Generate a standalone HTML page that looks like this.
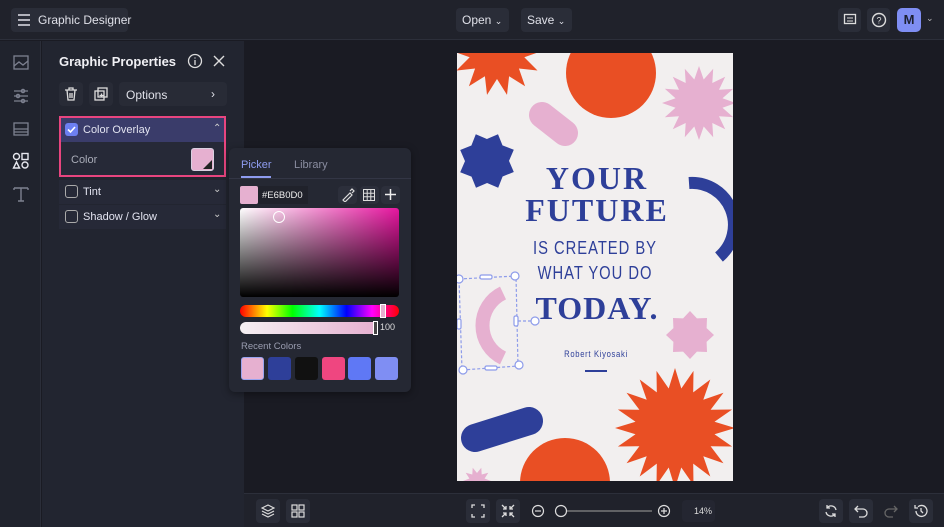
<!DOCTYPE html>
<html><head><meta charset="utf-8"><style>
*{box-sizing:border-box;margin:0;padding:0}
body{width:944px;height:527px;overflow:hidden;background:#1a1b23;font-family:"Liberation Sans",sans-serif;color:#e6e7ee;position:relative}
.abs{position:absolute}
.btn{position:absolute;background:#2a2d38;border-radius:4px}
.t{font-size:12px;color:#dfe0e8}
</style></head><body>
<!-- top bar -->
<div class="abs" style="left:0;top:0;width:944px;height:40px;background:#20222b;border-bottom:1px solid #2c2f3a"></div>
<div class="btn" style="left:11px;top:8px;width:117px;height:24px"></div>
<svg class="abs" style="left:17px;top:13px" width="14" height="14"><path d="M1 2h12M1 7h12M1 12h12" stroke="#e0e0e8" stroke-width="1.6"/></svg>
<div class="abs t" style="left:38px;top:13px">Graphic Designer</div>
<div class="btn" style="left:456px;top:8px;width:53px;height:24px"></div>
<div class="abs t" style="left:462px;top:13px">Open <span style="font-size:9px">⌄</span></div>
<div class="btn" style="left:521px;top:8px;width:51px;height:24px"></div>
<div class="abs t" style="left:527px;top:13px">Save <span style="font-size:9px">⌄</span></div>
<div class="btn" style="left:838px;top:8px;width:23px;height:24px"></div>
<svg class="abs" style="left:843px;top:13px" width="14" height="14"><rect x="1.5" y="1.5" width="11" height="9" fill="none" stroke="#ddd" stroke-width="1.3"/><path d="M4 5h6M4 8h6" stroke="#ddd"/></svg>
<div class="btn" style="left:867px;top:8px;width:23px;height:24px"></div>
<svg class="abs" style="left:871px;top:12px" width="16" height="16"><circle cx="8" cy="8" r="6.5" fill="none" stroke="#ddd" stroke-width="1.4"/><text x="8" y="11.5" font-size="9" fill="#ddd" text-anchor="middle" font-family="Liberation Sans">?</text></svg>
<div class="abs" style="left:897px;top:8px;width:24px;height:24px;background:#7f8ef3;border-radius:5px;color:#1d2030;font-size:13px;font-weight:bold;text-align:center;line-height:24px">M</div>
<div class="abs" style="left:926px;top:13px;font-size:9px;color:#bbb">⌄</div>
<!-- left rail -->
<div class="abs" style="left:0;top:41px;width:41px;height:486px;background:#20232d;border-right:1px solid #2b2e39"></div>
<svg class="abs" style="left:12px;top:54px" width="18" height="50" fill="none" stroke="#7d8190" stroke-width="1.3">
<rect x="2" y="2" width="14" height="13"/><path d="M2 12l5-4 4 3 5-4"/>
<path d="M2 37h14M2 42h14M2 47h14"/><circle cx="11" cy="37" r="1.6"/><circle cx="6" cy="42" r="1.6"/><circle cx="11" cy="47" r="1.6"/>
</svg>
<svg class="abs" style="left:12px;top:120px" width="18" height="18" fill="none" stroke="#7d8190" stroke-width="1.3"><rect x="2" y="3" width="14" height="12"/><path d="M2 9h14M2 12h14"/></svg>
<svg class="abs" style="left:12px;top:152px" width="18" height="18" fill="none" stroke="#e6e7ee" stroke-width="1.4"><circle cx="4.5" cy="4.5" r="3"/><rect x="10" y="1.5" width="6" height="6"/><path d="M4.5 10l3 6h-6z"/><circle cx="13" cy="13" r="3"/></svg>
<svg class="abs" style="left:12px;top:186px" width="18" height="16" fill="none" stroke="#7d8190" stroke-width="1.4"><path d="M2 2h14M2 2v2M16 2v2M9 2v13M6 15h6"/></svg>
<!-- panel -->
<div class="abs" style="left:42px;top:41px;width:202px;height:486px;background:#222530"></div>
<div class="abs" style="left:59px;top:54px;font-size:13px;font-weight:bold;color:#f0f0f4">Graphic Properties</div>
<svg class="abs" style="left:187px;top:53px" width="16" height="16" fill="none" stroke="#ddd" stroke-width="1.3"><circle cx="8" cy="8" r="6.5"/><path d="M8 7v5M8 4.5v1"/></svg>
<svg class="abs" style="left:213px;top:55px" width="12" height="12" stroke="#ddd" stroke-width="1.4"><path d="M1 1l10 10M11 1L1 11"/></svg>
<div class="btn" style="left:59px;top:82px;width:24px;height:24px;background:#282b36"></div>
<svg class="abs" style="left:64px;top:87px" width="14" height="14" fill="none" stroke="#ddd" stroke-width="1.3"><path d="M1 3h12M5 3V1h4v2M3 3l1 10h6l1-10M6 6v5M8 6v5"/></svg>
<div class="btn" style="left:89px;top:82px;width:24px;height:24px;background:#282b36"></div>
<svg class="abs" style="left:94px;top:87px" width="14" height="14" fill="none" stroke="#ddd" stroke-width="1.3"><rect x="4" y="1" width="9" height="9"/><rect x="1" y="4" width="9" height="9"/><path d="M5.5 8.5h4M7.5 6.5v4"/></svg>
<div class="btn" style="left:119px;top:82px;width:108px;height:24px;background:#282b36"></div>
<div class="abs t" style="left:126px;top:88px">Options</div>
<div class="abs t" style="left:211px;top:87px">›</div>
<!-- color overlay -->
<div class="abs" style="left:59px;top:116px;width:167px;height:61px;border:2px solid #e8457f;background:#262937"></div>
<div class="abs" style="left:61px;top:118px;width:163px;height:24px;background:#3a3c6a"></div>
<div class="abs" style="left:65px;top:123px;width:13px;height:13px;background:#6d7ff0;border-radius:3px"></div>
<svg class="abs" style="left:66px;top:124px" width="11" height="11" fill="none" stroke="#fff" stroke-width="1.6"><path d="M2 5.5l2.5 2.5L9 3"/></svg>
<div class="abs" style="left:83px;top:124px;font-size:11px;color:#e2e3f0">Color Overlay</div>
<div class="abs" style="left:213px;top:123px;font-size:10px;color:#ccc">⌃</div>
<div class="abs" style="left:71px;top:154px;font-size:11px;color:#a9acb8">Color</div>
<div class="abs" style="left:191px;top:148px;width:23px;height:23px;background:#e6b0d0;border-radius:3px;border:1px solid #d9d0e0"></div>
<svg class="abs" style="left:203px;top:160px" width="9" height="9"><path d="M9 0V9H0z" fill="#222"/></svg>
<div class="abs" style="left:59px;top:180px;width:167px;height:24px;background:#262937"></div>
<div class="abs" style="left:65px;top:185px;width:13px;height:13px;border:1.3px solid #aaa;border-radius:3px"></div>
<div class="abs" style="left:83px;top:186px;font-size:11px;color:#e2e3f0">Tint</div>
<div class="abs" style="left:213px;top:184px;font-size:10px;color:#ccc">⌄</div>
<div class="abs" style="left:59px;top:205px;width:167px;height:24px;background:#262937"></div>
<div class="abs" style="left:65px;top:210px;width:13px;height:13px;border:1.3px solid #aaa;border-radius:3px"></div>
<div class="abs" style="left:83px;top:211px;font-size:11px;color:#e2e3f0">Shadow / Glow</div>
<div class="abs" style="left:213px;top:209px;font-size:10px;color:#ccc">⌄</div>
<!-- bottom bar -->
<div class="abs" style="left:244px;top:493px;width:700px;height:34px;background:#20222b;border-top:1px solid #2c2f3a"></div>
<div class="btn" style="left:256px;top:499px;width:24px;height:24px"></div>
<svg class="abs" style="left:261px;top:504px" width="14" height="14" fill="none" stroke="#ddd" stroke-width="1.2"><path d="M7 1l6 3-6 3-6-3zM1 7l6 3 6-3M1 10l6 3 6-3"/></svg>
<div class="btn" style="left:286px;top:499px;width:24px;height:24px"></div>
<svg class="abs" style="left:291px;top:504px" width="14" height="14" fill="none" stroke="#ddd" stroke-width="1.2"><rect x="1" y="1" width="5" height="5"/><rect x="8" y="1" width="5" height="5"/><rect x="1" y="8" width="5" height="5"/><rect x="8" y="8" width="5" height="5"/></svg>
<div class="btn" style="left:466px;top:499px;width:24px;height:24px"></div>
<svg class="abs" style="left:471px;top:504px" width="14" height="14" fill="none" stroke="#ddd" stroke-width="1.3"><path d="M1 4V1h3M10 1h3v3M13 10v3h-3M4 13H1v-3"/></svg>
<div class="btn" style="left:496px;top:499px;width:24px;height:24px"></div>
<svg class="abs" style="left:501px;top:504px" width="14" height="14" fill="none" stroke="#ddd" stroke-width="1.3"><path d="M1 1l4 4M5 2v3H2M13 13l-4-4M9 12V9h3M13 1L9 5M12 5H9V2M1 13l4-4M2 9h3v3"/></svg>
<svg class="abs" style="left:530px;top:504px" width="200" height="16" fill="none" stroke="#ddd" stroke-width="1.2"><circle cx="8" cy="7" r="5.5"/><path d="M5 7h6"/><circle cx="31" cy="7" r="5.5"/><path d="M37 7h85" stroke="#888"/><circle cx="134" cy="7" r="5.5"/><path d="M131 7h6M134 4v6"/></svg>
<div class="btn" style="left:682px;top:500px;width:33px;height:22px;background:#242631"></div>
<div class="abs" style="left:694px;top:506px;font-size:9px;color:#ddd">14%</div>
<div class="btn" style="left:819px;top:499px;width:24px;height:24px"></div>
<svg class="abs" style="left:824px;top:504px" width="14" height="14" fill="none" stroke="#ddd" stroke-width="1.3"><path d="M12 6A5 5 0 0 0 3 4M2 8a5 5 0 0 0 9 2M3 1v3h3M11 13v-3H8"/></svg>
<div class="btn" style="left:849px;top:499px;width:24px;height:24px"></div>
<svg class="abs" style="left:854px;top:504px" width="14" height="14" fill="none" stroke="#ddd" stroke-width="1.3"><path d="M4 2L1 5l3 3M1 5h8a4 4 0 0 1 0 8H5"/></svg>
<svg class="abs" style="left:884px;top:504px" width="14" height="14" fill="none" stroke="#666" stroke-width="1.3"><path d="M10 2l3 3-3 3M13 5H5a4 4 0 0 0 0 8h4"/></svg>
<div class="btn" style="left:909px;top:499px;width:24px;height:24px"></div>
<svg class="abs" style="left:914px;top:504px" width="14" height="14" fill="none" stroke="#ddd" stroke-width="1.3"><path d="M2 7a5.5 5.5 0 1 0 2-4.3M1 1v3h3M7 4v3l2 2"/></svg>
<!-- poster -->
<svg class="abs" style="left:457px;top:53px" width="276" height="428" viewBox="0 0 276 428">
<rect width="276" height="428" fill="#f2efef"/>
<g id="shapes"></g>
<circle cx="154" cy="20" r="45" fill="#e94f24"/>
<line x1="85" y1="62" x2="108" y2="80" stroke="#e6b0d0" stroke-width="26" stroke-linecap="round"/>
<path d="M232 130 A 42 42 0 0 1 262 204" fill="none" stroke="#2e3f99" stroke-width="12"/>
<path d="M46 240 A 36 36 0 0 0 46 305" fill="none" stroke="#e6b0d0" stroke-width="14"/>
<line x1="18" y1="385" x2="72" y2="368" stroke="#2e3f99" stroke-width="28" stroke-linecap="round"/>
<circle cx="108" cy="430" r="45" fill="#e94f24"/>
<line x1="128" y1="318" x2="150" y2="318" stroke="#2e3f99" stroke-width="2"/>
<g font-family="Liberation Serif,serif" font-weight="bold" fill="#2e3f99" text-anchor="middle">
<text x="140" y="136" font-size="32" letter-spacing="2">YOUR</text>
<text x="140" y="168" font-size="32" letter-spacing="2">FUTURE</text>
<text x="140" y="266" font-size="32" letter-spacing="1">TODAY.</text>
</g>
<g font-family="Liberation Sans,sans-serif" fill="#2e3f99" text-anchor="middle">
<text x="0" y="0" font-size="18" letter-spacing="1.2" transform="translate(138 201) scale(0.82 1.05)">IS CREATED BY</text>
<text x="0" y="0" font-size="18" letter-spacing="1.2" transform="translate(138 226) scale(0.82 1.05)">WHAT YOU DO</text>
<text x="0" y="0" font-size="9" letter-spacing="0.8" transform="translate(139 304) scale(0.85 1)">Robert Kiyosaki</text>
</g>
<g fill="#fff" stroke="#8d9bea" stroke-width="1.2">
<path d="M2 226L59 223L61 313L5 317Z" fill="none" stroke-dasharray="3 2"/>
<path d="M61 268H77" fill="none" stroke-dasharray="3 2"/>
<circle cx="2" cy="226" r="4"/><circle cx="58" cy="223" r="4"/><circle cx="62" cy="312" r="4"/><circle cx="6" cy="317" r="4"/><circle cx="78" cy="268" r="4"/>
<rect x="23" y="222" width="12" height="4" rx="1.5"/><rect x="28" y="313" width="12" height="4" rx="1.5"/><rect x="0" y="266" width="4" height="10" rx="1.5"/><rect x="57" y="263" width="4" height="10" rx="1.5"/>
</g>
</svg>
<script>
function star(cx,cy,ro,ri,n,rot){let p=[];for(let i=0;i<2*n;i++){let a=rot+Math.PI*i/n,r=i%2?ri:ro;p.push((cx+r*Math.cos(a)).toFixed(1)+','+(cy+r*Math.sin(a)).toFixed(1));}return p.join(' ');}
const S=[[40,-2,45,28,14,0,'#e94f24'],[242,50,37,24,16,0,'#e6b0d0'],[30,108,29,22,8,0.39,'#2e3f99'],[233,282,24,18,8,0,'#e6b0d0'],[218,375,60,40,20,0,'#e94f24'],[20,428,14,8,10,0,'#e6b0d0']];
let g=document.getElementById('shapes'),h='';S.forEach(s=>{h+='<polygon points="'+star(s[0],s[1],s[2],s[3],s[4],s[5])+'" fill="'+s[6]+'"/>';});g.innerHTML=h;
</script>
<!-- popup -->
<div class="abs" style="left:229px;top:148px;width:182px;height:244px;background:#252833;border-radius:6px;box-shadow:0 2px 8px rgba(0,0,0,.4)"></div>
<div class="abs" style="left:241px;top:159px;font-size:11px;color:#8e9cf0">Picker</div>
<div class="abs" style="left:241px;top:176px;width:30px;height:2px;background:#8e9cf0"></div>
<div class="abs" style="left:294px;top:159px;font-size:11px;color:#8a8da0">Library</div>
<div class="abs" style="left:229px;top:178px;width:182px;height:1px;background:#333645"></div>
<div class="abs" style="left:240px;top:186px;width:18px;height:18px;background:#e6b0d0;border-radius:2px"></div>
<div class="abs" style="left:258px;top:186px;width:50px;height:18px;background:#20222b"></div>
<div class="abs" style="left:262px;top:190px;font-size:9.5px;color:#eee">#E6B0D0</div>
<div class="btn" style="left:338px;top:186px;width:19px;height:18px;background:#2c2f3b"></div>
<svg class="abs" style="left:341px;top:188px" width="14" height="14" fill="none" stroke="#ddd" stroke-width="1.2"><path d="M2 12l7-7 2 2-7 7zM9 3l2-2 2 2-2 2"/></svg>
<div class="btn" style="left:360px;top:186px;width:19px;height:18px;background:#2c2f3b"></div>
<svg class="abs" style="left:363px;top:189px" width="12" height="12" fill="none" stroke="#ddd" stroke-width="1"><rect x="0.5" y="0.5" width="11" height="11"/><path d="M4.2 0v12M7.8 0v12M0 4.2h12M0 7.8h12"/></svg>
<div class="btn" style="left:381px;top:186px;width:19px;height:18px;background:#2c2f3b"></div>
<svg class="abs" style="left:384px;top:188px" width="13" height="13" stroke="#eee" stroke-width="1.5"><path d="M6.5 1v11M1 6.5h11"/></svg>
<div class="abs" style="left:240px;top:208px;width:159px;height:89px;border-radius:3px;background:linear-gradient(to bottom,rgba(0,0,0,0),#000),linear-gradient(to right,#fff,#e6169f)"></div>
<div class="abs" style="left:273px;top:211px;width:12px;height:12px;border:1.5px solid #fff;border-radius:50%"></div>
<div class="abs" style="left:240px;top:305px;width:159px;height:12px;border-radius:6px;background:linear-gradient(to right,#f00,#ff0 17%,#0f0 33%,#0ff 50%,#00f 67%,#f0f 83%,#f00)"></div>
<div class="abs" style="left:380px;top:304px;width:6px;height:14px;border:1.5px solid #fff;background:#e6b0d0"></div>
<div class="abs" style="left:240px;top:322px;width:137px;height:12px;border-radius:6px 0 0 6px;background:linear-gradient(to right,#f5f0f3,#e6b0d0)"></div>
<div class="abs" style="left:373px;top:321px;width:5px;height:14px;border:1.5px solid #fff;background:#444"></div>
<div class="abs" style="left:380px;top:322px;font-size:9px;color:#ddd">100</div>
<div class="abs" style="left:241px;top:341px;font-size:9.5px;color:#9a9db0">Recent Colors</div>
<div class="abs" style="left:241px;top:357px;width:23px;height:23px;background:#e6b0d0;border-radius:3px;border:1px solid #9aa4f0"></div>
<div class="abs" style="left:268px;top:357px;width:23px;height:23px;background:#2e3f99;border-radius:3px"></div>
<div class="abs" style="left:295px;top:357px;width:23px;height:23px;background:#111;border-radius:3px"></div>
<div class="abs" style="left:322px;top:357px;width:23px;height:23px;background:#ef4680;border-radius:3px"></div>
<div class="abs" style="left:348px;top:357px;width:23px;height:23px;background:#5f78f5;border-radius:3px"></div>
<div class="abs" style="left:375px;top:357px;width:23px;height:23px;background:#7f8ef3;border-radius:3px"></div>
</body></html>
